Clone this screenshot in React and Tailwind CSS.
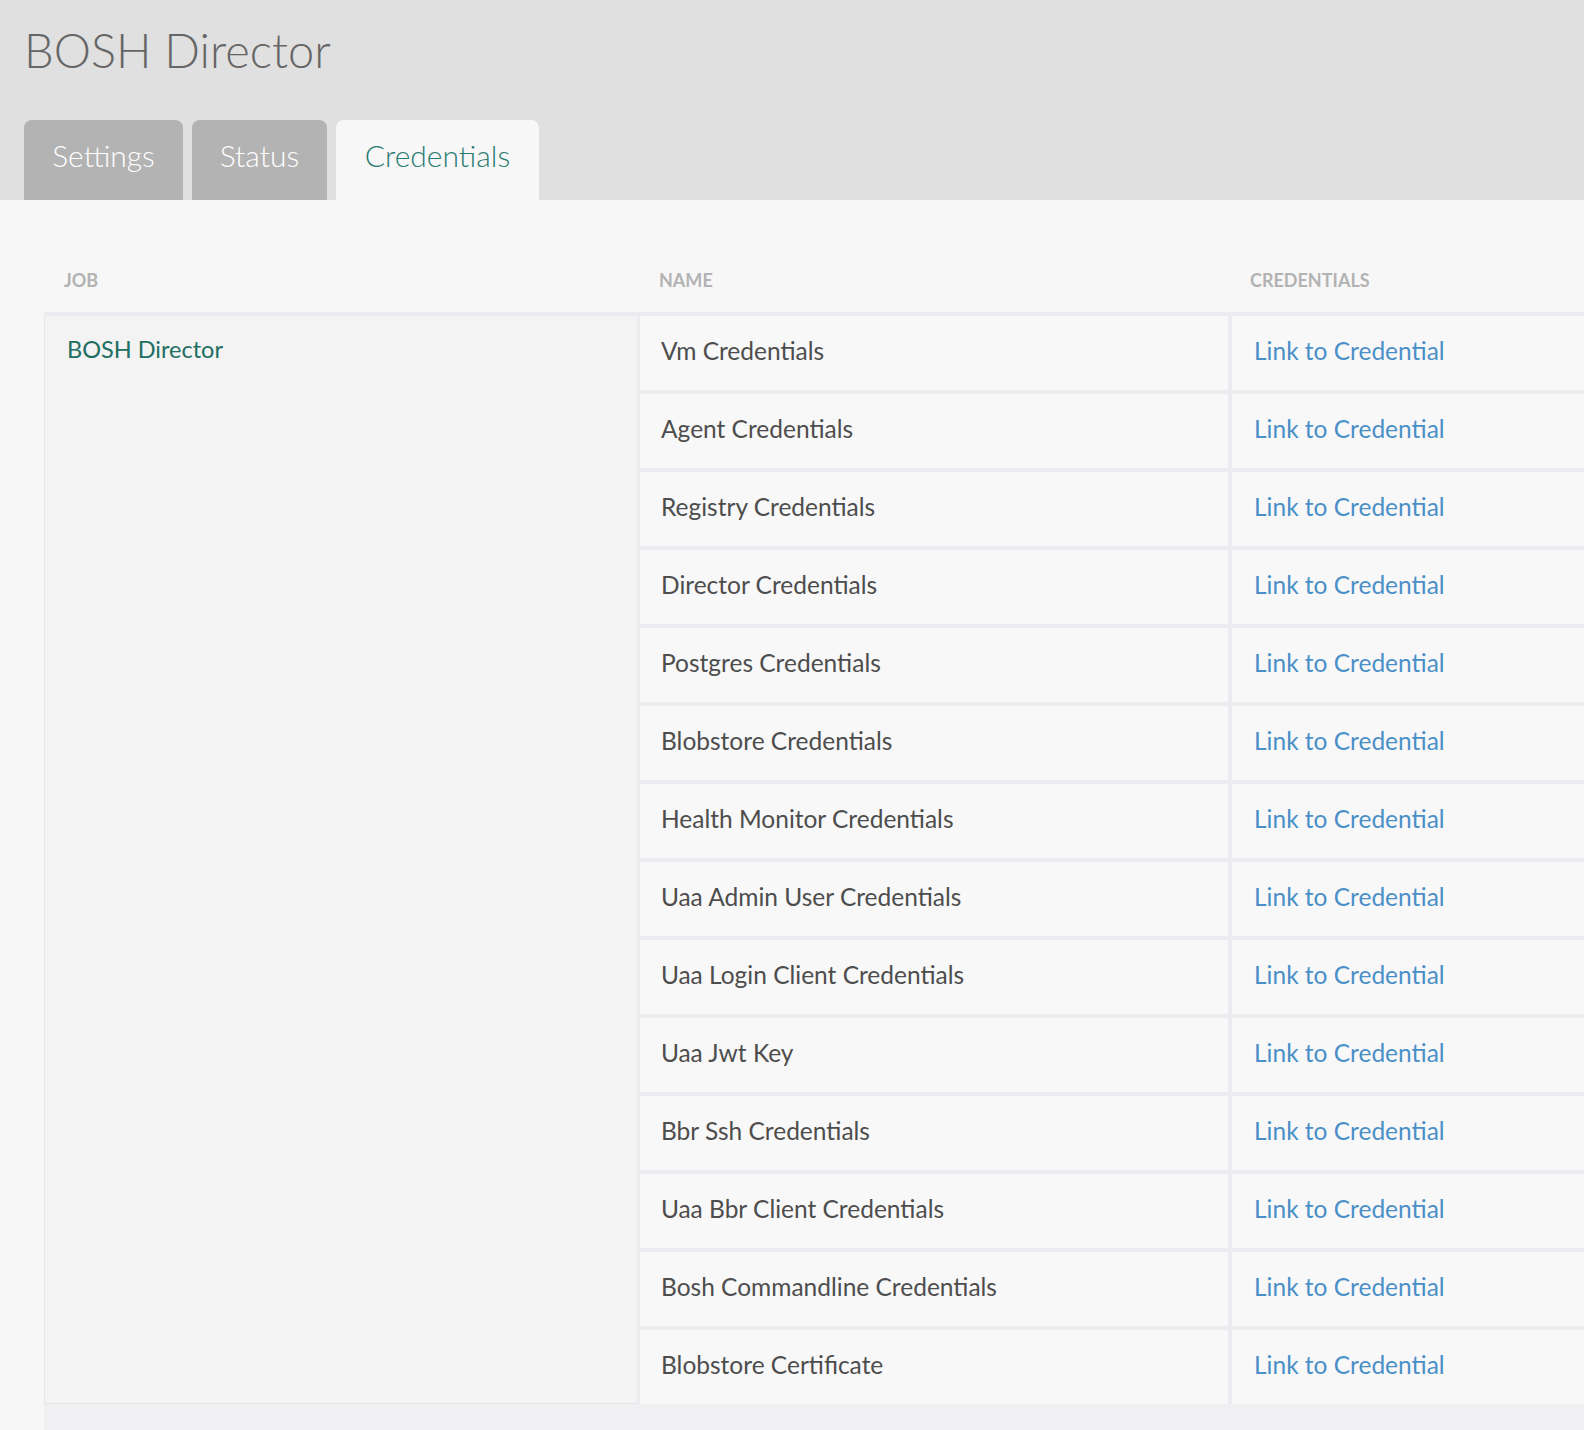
const rows = [
  'Vm Credentials',
  'Agent Credentials',
  'Registry Credentials',
  'Director Credentials',
  'Postgres Credentials',
  'Blobstore Credentials',
  'Health Monitor Credentials',
  'Uaa Admin User Credentials',
  'Uaa Login Client Credentials',
  'Uaa Jwt Key',
  'Bbr Ssh Credentials',
  'Uaa Bbr Client Credentials',
  'Bosh Commandline Credentials',
  'Blobstore Certificate',
]

export default function App() {
  return (
    <div className="min-h-screen bg-[#f7f7f7] font-['Lato',sans-serif]">
      {/* Page header with tabs */}
      <header className="bg-[#e0e0e0] pl-[24px]">
        <h1 className="pt-[21px] text-[47px] font-light leading-[59px] text-[#666666]">
          BOSH Director
        </h1>
        <nav className="mt-[40px] flex gap-[9px]">
          <a className="h-[80px] w-[159px] rounded-t-[8px] bg-[#b3b3b3] pt-[17px] text-center text-[30px] font-light leading-[36px] text-white">
            Settings
          </a>
          <a className="h-[80px] w-[135px] rounded-t-[8px] bg-[#b3b3b3] pt-[17px] text-center text-[30px] font-light leading-[36px] text-white">
            Status
          </a>
          <a className="h-[80px] w-[203px] rounded-t-[8px] bg-[#f7f7f7] pt-[17px] text-center text-[30px] font-light leading-[36px] text-[#2a7c70]">
            Credentials
          </a>
        </nav>
      </header>

      {/* Credentials table */}
      <section className="ml-[44px] bg-[#f0f0f2] pb-[26px]">
        <div className="-ml-[44px] flex bg-[#f7f7f7] pl-[44px] pt-[69px] pb-[21px] text-[18px] font-bold uppercase leading-[22px] text-[#b3b3b3]">
          <div className="w-[596px] pl-[20px]">Job</div>
          <div className="w-[592px] pl-[19px]">Name</div>
          <div className="flex-1 pl-[18px]">Credentials</div>
        </div>

        <div className="flex bg-[#ebebf0] pt-[4px]">
          <div className="w-[593px] border-b border-l border-[#e6e6e6] bg-[#f3f3f3] pl-[22px] pt-[19px] text-[23.5px] leading-[28px] text-[#216e62]">
            BOSH Director
          </div>
          <div className="ml-[3px] flex flex-1 flex-col gap-[4px]">
            {rows.map((name) => (
              <div key={name} className="flex h-[74px] gap-[4px] text-[24.5px] leading-[28px]">
                <div className="w-[588px] bg-[#f8f8f8] pl-[21px] pt-[21px] text-[#4d4d4d]">{name}</div>
                <div className="flex-1 bg-[#f8f8f8] pl-[22px] pt-[21px] text-[#4a8fc7]">
                  <a href="#">Link to Credential</a>
                </div>
              </div>
            ))}
          </div>
        </div>
      </section>
    </div>
  )
}
